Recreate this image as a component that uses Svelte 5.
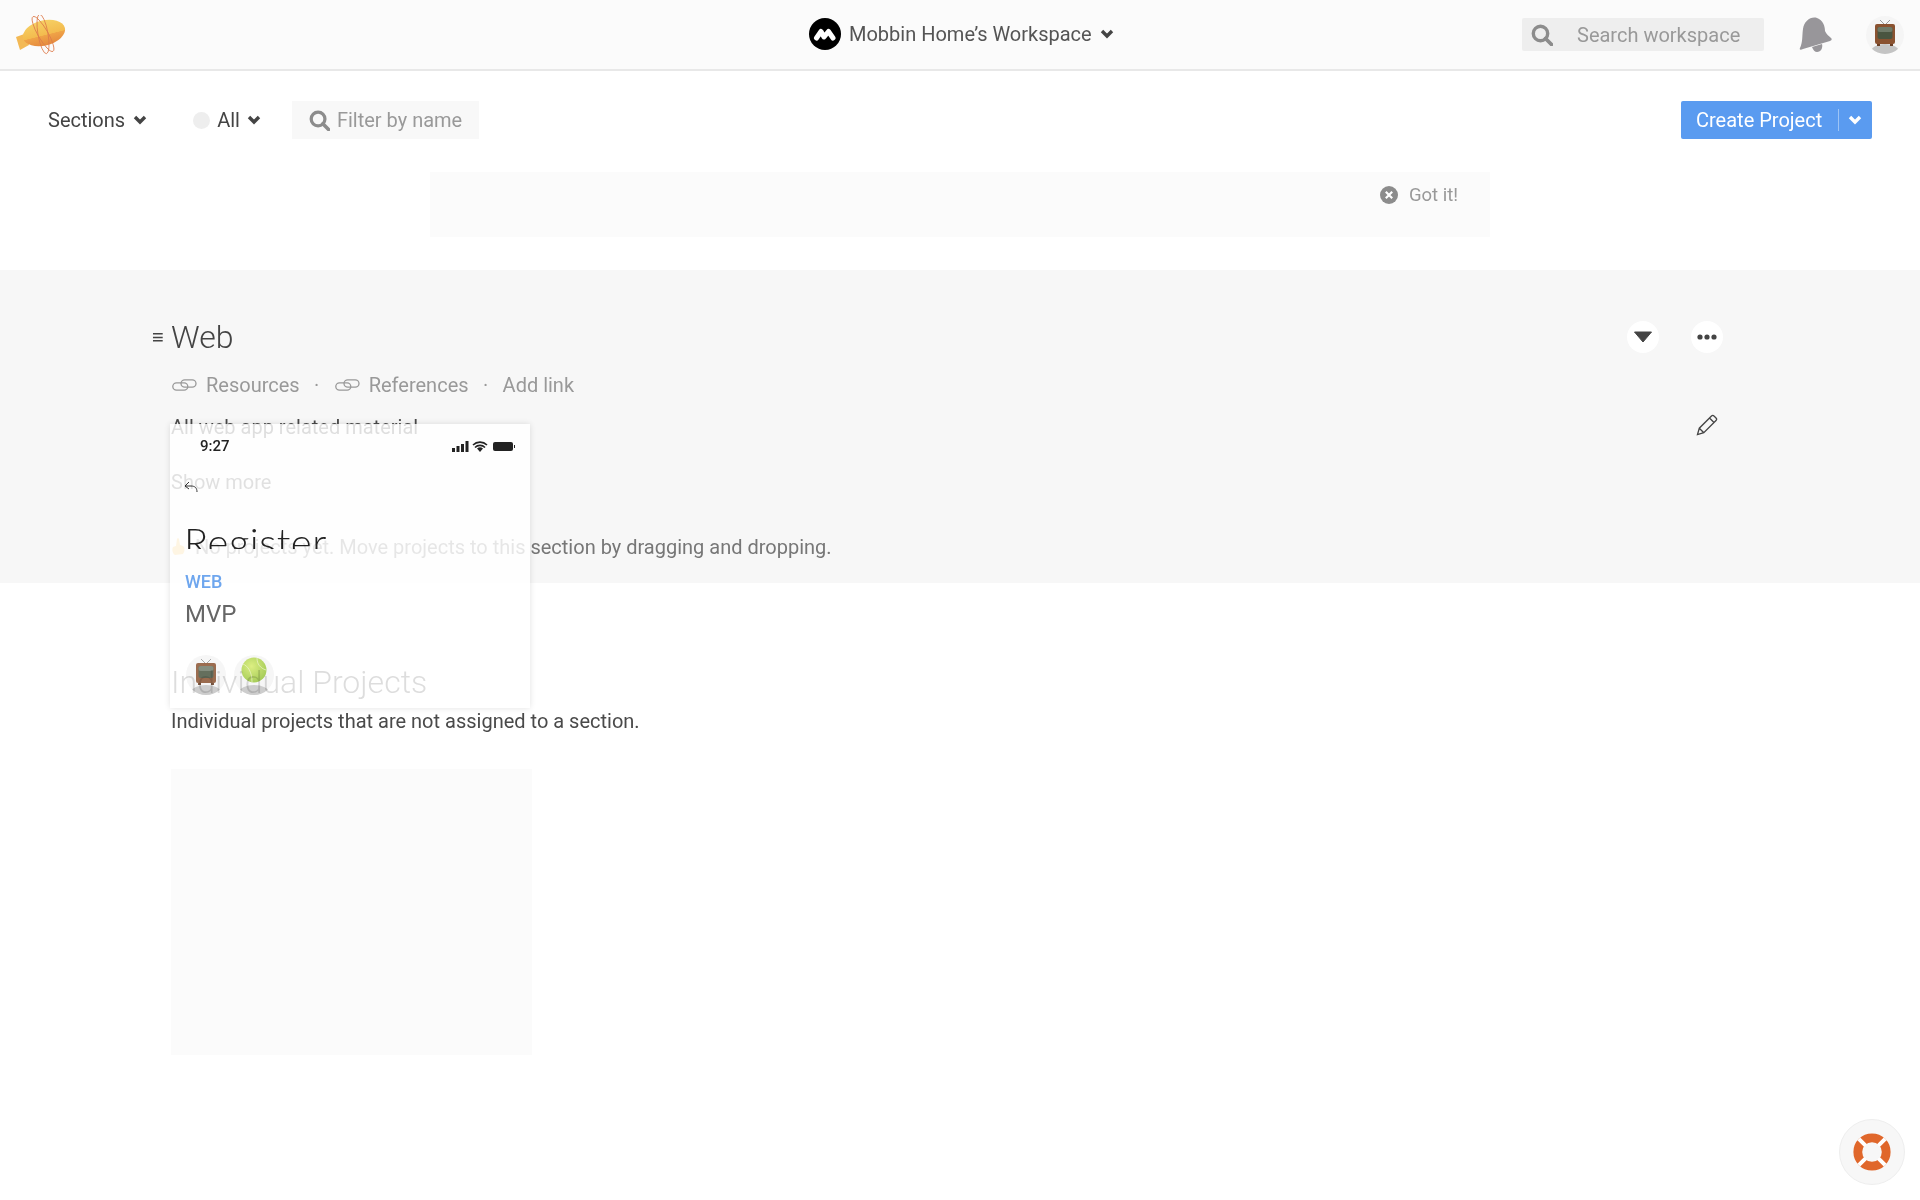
<script>
	let links = ['Resources', 'References'];
</script>

{#snippet chevron(color)}
	<svg class="chev" viewBox="0 0 14 10" width="14" height="10">
		<polyline points="2,2 7,7 12,2" fill="none" stroke={color} stroke-width="3.4" />
	</svg>
{/snippet}

{#snippet search(w)}
	<svg viewBox="0 0 22 22" width={w} height={w}>
		<circle cx="9.5" cy="9.5" r="7.2" fill="none" stroke="#8c8c8c" stroke-width="3.4" />
		<line x1="14.5" y1="14.5" x2="20.5" y2="20.5" stroke="#8c8c8c" stroke-width="3.8" stroke-linecap="round" />
	</svg>
{/snippet}

{#snippet link()}
	<svg viewBox="0 0 25 12" width="25" height="12">
		<g fill="none" stroke="#999" stroke-width="1.3">
			<rect x="0.8" y="3.8" width="15" height="7.4" rx="3.7" />
			<rect x="9" y="0.8" width="15" height="7.4" rx="3.7" />
		</g>
	</svg>
{/snippet}

{#snippet tv()}
	<svg viewBox="0 0 24 30" width="24" height="30">
		<path d="M12 7L7 2M12 7l5-5" stroke="#999" stroke-width="1" fill="none" />
		<rect x="2" y="6" width="20" height="20" rx="2" fill="#8a5230" />
		<rect x="4.5" y="9" width="15" height="12" rx="2" fill="#4a5540" />
		<rect x="4.5" y="9" width="15" height="5" rx="2" fill="#6f7a68" />
		<rect x="4" y="26" width="3" height="2" fill="#6b3f25" />
		<rect x="17" y="26" width="3" height="2" fill="#6b3f25" />
	</svg>
{/snippet}

<header class="top">
	<svg class="zeppelin" viewBox="0 0 50 40" width="50" height="40">
		<defs>
			<linearGradient id="hull" x1="0" y1="0" x2="0" y2="1">
				<stop offset="0" stop-color="#f6d064" />
				<stop offset="0.58" stop-color="#f3bb4e" />
				<stop offset="0.6" stop-color="#efa347" />
				<stop offset="1" stop-color="#e58a3e" />
			</linearGradient>
		</defs>
		<polygon points="0,22 11,18 13,30 4,35" fill="#f3b955" />
		<ellipse cx="28" cy="18" rx="21.5" ry="12.5" fill="url(#hull)" transform="rotate(-14 28 18)" />
		<ellipse cx="27" cy="19" rx="5" ry="20" fill="none" stroke="#dd7a4a" stroke-width="0.8" transform="rotate(-10 27 19)" />
		<ellipse cx="27" cy="19" rx="5" ry="20" fill="none" stroke="#dd7a4a" stroke-width="0.8" transform="rotate(-30 27 19)" />
	</svg>

	<div class="workspace">
		<svg viewBox="0 0 32 32" width="32" height="32">
			<circle cx="16" cy="16" r="16" fill="#000" />
			<polyline points="7.5,20 12,13.5 15,19 19.500,13.500 24,20" fill="none" stroke="#fff" stroke-width="5" stroke-linejoin="round" stroke-linecap="round" />
		</svg>
		<span>Mobbin Home’s Workspace</span>
		{@render chevron('#444')}
	</div>

	<div class="top-right">
		<div class="search-box">
			{@render search(22)}
			<span>Search workspace</span>
		</div>
		<svg class="bell" viewBox="0 0 34 36" width="34" height="36">
			<path d="M1 31C4 25 3 18 4 12 5 4 12-1 18 1c6 2 8 8 8 13 1 3 4 5 6 7 1 1 1 2-1 3L4 32c-2 1-4 1-3-1z" fill="#98969a" />
			<path d="M13 30l10-3c1 4-1 8-5 8-2 0-4-2-5-5z" fill="#98969a" />
		</svg>
		<div class="avatar">{@render tv()}<i></i></div>
	</div>
</header>

<main class="page">
	<div class="toolbar">
		<div class="drop sections">Sections {@render chevron('#444')}</div>
		<div class="drop status"><b class="dot"></b>All {@render chevron('#444')}</div>
		<div class="filter">
			{@render search(21)}
			<span>Filter by name</span>
		</div>
		<div class="create">
			<span>Create Project</span>
			<em></em>
			{@render chevron('#fff')}
		</div>
	</div>

	<div class="notice">
		<div class="got">
			<svg viewBox="0 0 18 18" width="18" height="18">
				<circle cx="9" cy="9" r="9" fill="#8c8c8c" />
				<path d="M5.800 5.800l6.400 6.400M12.200 5.800l-6.400 6.400" stroke="#fff" stroke-width="2.200" />
			</svg>
			Got it!
		</div>
	</div>

	<section class="web">
		<div class="web-main">
			<div class="title-row">
				<span class="handle">≡</span>
				<h2>Web</h2>
			</div>
			<div class="links">
				{#each links as name}
					<span class="lnk">{@render link()}{name}</span>
					<span class="sep">·</span>
				{/each}
				<span>Add link</span>
			</div>
			<p class="desc">All web app related material</p>
			<p class="more">Show more</p>
			<p class="empty">
				<svg viewBox="0 0 16 18" width="16" height="18">
					<path d="M4 17c-3-2-3-6-2-8l3-1 1-7c0-1 2-1 2 0l1 6 3 1c2 1 2 5 0 8z" fill="#f6c667" />
				</svg>
				No projects yet. Move projects to this section by dragging and dropping.
			</p>
		</div>
		<div class="actions">
			<div class="round-btns">
				<span class="round">
					<svg viewBox="0 0 20 12" width="20" height="12"><path d="M1.500 1h17L10 11z" fill="#444" stroke="#444" stroke-linejoin="round" /></svg>
				</span>
				<span class="round">
					<svg viewBox="0 0 20 6" width="20" height="6"><circle cx="3" cy="3" r="2.600" fill="#444" /><circle cx="10" cy="3" r="2.600" fill="#444" /><circle cx="17" cy="3" r="2.600" fill="#444" /></svg>
				</span>
			</div>
			<svg class="pencil" viewBox="0 0 22 22" width="22" height="22">
				<path d="M1.500 20.500l1.800-6.300L15.500 2c.8-.8 1.800-.8 2.500 0l2 2c.8.8.8 1.700 0 2.500L7.800 18.700zM3.300 14.200l4.500 4.500M13.500 4l4.500 4.500" fill="none" stroke="#444" stroke-width="1.300" />
			</svg>
		</div>
	</section>

	<section class="individual">
		<h2>Individual Projects</h2>
		<p class="desc">Individual projects that are not assigned to a section.</p>
		<div class="placeholder"></div>
	</section>

	<!-- card being dragged, page shows through it -->
	<div class="ghost">
		<div class="shot">
			<div class="status-bar">
				<span>9:27</span>
				<svg viewBox="0 0 64 14" width="64" height="14">
					<g fill="#222">
						<rect x="0" y="9" width="3" height="4" /><rect x="4.500" y="7" width="3" height="6" /><rect x="9" y="5" width="3" height="8" /><rect x="13.500" y="2" width="3" height="11" />
						<path d="M28 13l-3-3.500a4.500 4.500 0 0 1 6 0z" />
						<rect x="41" y="3" width="20" height="9" rx="2" />
						<rect x="62" y="6" width="1" height="3" />
					</g>
					<path d="M21 6a10 10 0 0 1 14 0M23 8.500a7 7 0 0 1 10 0" fill="none" stroke="#222" stroke-width="1.600" />
				</svg>
			</div>
			<svg class="back" viewBox="0 0 14 12" width="14" height="12">
				<path d="M5 1L1 5l4 3M1 5h6c4 0 6 2 6 6" fill="none" stroke="#333" stroke-width="1" />
			</svg>
			<div class="register">Register</div>
		</div>
		<div class="tag">WEB</div>
		<div class="name">MVP</div>
		<div class="members">
			<div class="avatar">{@render tv()}<i></i></div>
			<div class="avatar">
				<svg viewBox="0 0 26 26" width="26" height="26">
					<defs>
						<radialGradient id="ball" cx="0.4" cy="0.35" r="0.7">
							<stop offset="0" stop-color="#d6ec6c" />
							<stop offset="1" stop-color="#94c23a" />
						</radialGradient>
					</defs>
					<circle cx="13" cy="13" r="12.500" fill="url(#ball)" />
					<path d="M2 7c5 2 9 8 9 18M16 1c0 6 3 10 9 12" fill="none" stroke="#eef5c8" stroke-width="0.7" />
				</svg>
				<i></i>
			</div>
		</div>
	</div>

	<div class="help">
		<svg viewBox="0 0 38 38" width="38" height="38">
			<circle cx="19" cy="19" r="14.200" fill="none" stroke="#e0672b" stroke-width="8.800" />
			<path d="M5.800 5.800l6.800 6.800M32.200 5.800l-6.800 6.800M5.800 32.200l6.800-6.800M32.200 32.200l-6.800-6.800" stroke="#fff" stroke-width="4" />
		</svg>
	</div>
</main>

<style>
	:global(body) {
		font-family: Roboto, 'Liberation Sans', sans-serif;
		background: #fff;
		color: #333;
	}
	h2,
	p {
		margin: 0;
		font-weight: normal;
	}
	.top {
		height: 69px;
		border-bottom: 2px solid #e8e8e8;
		background: #fbfbfb;
		display: flex;
		align-items: center;
		justify-content: space-between;
		position: relative;
	}
	.zeppelin {
		margin-left: 16px;
	}
	.workspace {
		position: absolute;
		left: 809px;
		top: 18px;
		display: flex;
		align-items: center;
		font-size: 20px;
		color: #555;
	}
	.workspace span {
		margin: 0 8px;
	}
	.top-right {
		display: flex;
		align-items: center;
	}
	.search-box {
		width: 242px;
		height: 33px;
		background: #eee;
		border-radius: 2px;
		display: flex;
		align-items: center;
		padding-left: 9px;
		box-sizing: border-box;
		gap: 24px;
		font-size: 20px;
		color: #999;
	}
	.bell {
		margin-left: 35px;
	}
	.top-right > .avatar {
		margin: 0 16px 0 33px;
	}
	.avatar {
		width: 38px;
		height: 38px;
		border-radius: 50%;
		background: #f5f5f5;
		position: relative;
		overflow: hidden;
		display: flex;
		justify-content: center;
		padding-top: 1px;
		box-sizing: border-box;
	}
	.avatar svg {
		position: relative;
		z-index: 1;
		margin-top: 1px;
	}
	.avatar i {
		position: absolute;
		left: 5px;
		right: 5px;
		bottom: -6px;
		height: 16px;
		border-radius: 50%;
		background: #c4c4c4;
	}
	.page {
		position: relative;
		height: 1129px;
		overflow: hidden;
	}
	.toolbar {
		display: flex;
		align-items: center;
		height: 38px;
		padding: 30px 48px 0;
		font-size: 20px;
		color: #444;
	}
	.drop {
		display: flex;
		align-items: center;
		gap: 8px;
	}
	.status {
		margin-left: 46px;
		gap: 7px;
	}
	.dot {
		width: 17px;
		height: 17px;
		background: #eee;
		border-radius: 50%;
	}
	.filter {
		margin-left: 31px;
		width: 187px;
		height: 38px;
		background: #f8f8f8;
		display: flex;
		align-items: center;
		gap: 7px;
		padding-left: 17px;
		box-sizing: border-box;
		color: #999;
	}
	.create {
		margin-left: auto;
		width: 191px;
		height: 38px;
		background: #5a9bf0;
		border-radius: 2px;
		color: #fff;
		display: flex;
		align-items: center;
		padding-left: 15px;
		box-sizing: border-box;
	}
	.create em {
		width: 1px;
		height: 22px;
		background: #9cc4f6;
		margin: 0 9px 0 16px;
	}
	.notice {
		width: 1060px;
		height: 65px;
		margin: 33px auto;
		background: #fbfbfb;
		box-sizing: border-box;
		padding: 12px 32px 0 0;
		display: flex;
		justify-content: flex-end;
	}
	.got {
		display: flex;
		align-items: center;
		gap: 11px;
		height: 22px;
		font-size: 18.5px;
		color: #999;
	}
	.web {
		background: #f7f7f7;
		height: 313px;
		padding: 47px 197px 0 171px;
		box-sizing: border-box;
		display: flex;
		justify-content: space-between;
	}
	.actions {
		margin-top: 4px;
		display: flex;
		flex-direction: column;
		align-items: flex-end;
	}
	.round-btns {
		display: flex;
		gap: 32px;
	}
	.round {
		width: 32px;
		height: 32px;
		border-radius: 50%;
		background: #fff;
		display: flex;
		align-items: center;
		justify-content: center;
	}
	.pencil {
		margin: 61px 5px 0 0;
	}
	.title-row {
		display: flex;
		align-items: center;
		height: 40px;
		margin-left: -19px;
		color: #444;
	}
	.handle {
		width: 19px;
		font-size: 20px;
	}
	h2 {
		font-size: 32px;
		font-weight: 300;
		color: #444;
		line-height: 40px;
	}
	.links {
		display: flex;
		align-items: center;
		height: 24px;
		margin-top: 16px;
		font-size: 20px;
		color: #999;
	}
	.lnk {
		display: flex;
		align-items: center;
		gap: 9px;
		margin-left: 1px;
	}
	.sep {
		width: 34px;
		text-align: center;
	}
	.desc {
		font-size: 20px;
		line-height: 24px;
		color: #4a4a4a;
		margin-top: 18px;
	}
	.more {
		font-size: 20px;
		line-height: 24px;
		margin-top: 31px;
		color: #555;
	}
	.empty {
		display: flex;
		align-items: center;
		gap: 8px;
		font-size: 20px;
		line-height: 24px;
		margin-top: 41px;
		color: #777;
	}
	.individual {
		padding: 79px 0 0 171px;
	}
	.individual .desc {
		margin-top: 7px;
	}
	.placeholder {
		width: 361px;
		height: 286px;
		margin-top: 36px;
		background: #fbfbfb;
	}
	.ghost {
		position: absolute;
		left: 170px;
		top: 353px;
		width: 360px;
		height: 284px;
		background: rgba(255, 255, 255, 0.82);
		box-shadow: 0 0 6px rgba(0, 0, 0, 0.12);
		box-sizing: border-box;
	}
	.shot {
		height: 125px;
		overflow: hidden;
		position: relative;
		mix-blend-mode: multiply;
	}
	.status-bar {
		display: flex;
		justify-content: space-between;
		align-items: center;
		padding: 13px 14px 0 30px;
		font-size: 15px;
		font-weight: 500;
		color: #222;
	}
	.back {
		position: absolute;
		left: 14px;
		top: 57px;
	}
	.register {
		position: absolute;
		left: 14px;
		top: 94px;
		font-family: Lato, sans-serif;
		font-weight: 300;
		font-size: 40px;
		line-height: 48px;
		letter-spacing: 0.5px;
		color: #222;
	}
	.tag {
		margin: 23px 0 0 15px;
		font-size: 18px;
		line-height: 20px;
		font-weight: 500;
		color: #6ea6ee;
	}
	.name {
		margin: 8px 0 0 15px;
		font-size: 24px;
		line-height: 28px;
		color: #666;
	}
	.members {
		display: flex;
		gap: 8px;
		margin: 27px 0 0 16px;
		opacity: 0.85;
		mix-blend-mode: multiply;
	}
	.members .avatar {
		width: 40px;
		height: 40px;
	}
	.help {
		position: absolute;
		left: 1839px;
		top: 1048px;
		width: 66px;
		height: 66px;
		border-radius: 50%;
		background: #f7f7f7;
		border: 1px solid #eee;
		box-sizing: border-box;
		display: flex;
		align-items: center;
		justify-content: center;
	}
</style>
